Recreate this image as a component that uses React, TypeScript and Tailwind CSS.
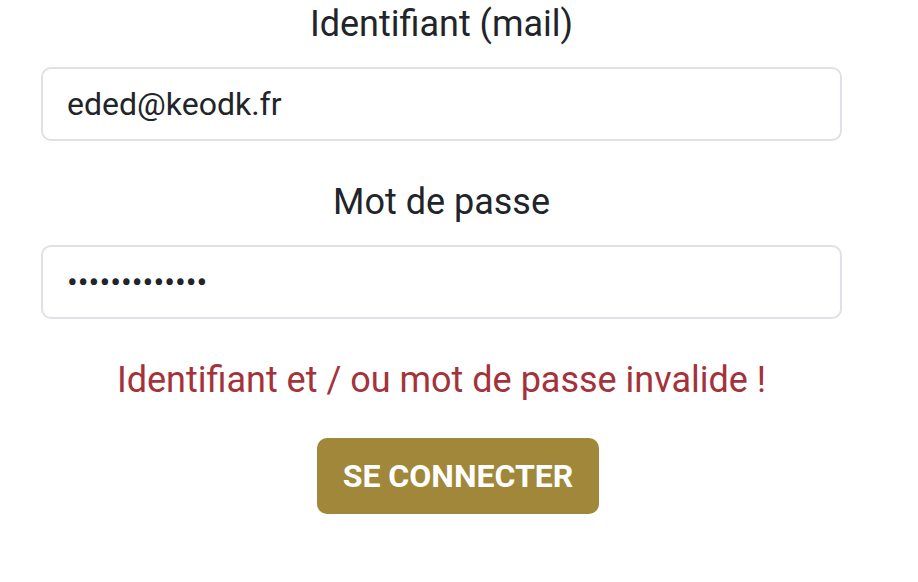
export default function App() {
  return (
    <div className="min-h-screen bg-white font-['Roboto',sans-serif] text-[#212529]">
      <form className="ml-[41px] flex w-[801px] flex-col items-center" onSubmit={(e) => e.preventDefault()}>
        <label htmlFor="mail" className="text-[36px] leading-[48px]">
          Identifiant (mail)
        </label>
        <input
          id="mail"
          type="text"
          defaultValue="eded@keodk.fr"
          className="mt-[19px] h-[74px] w-full rounded-[10px] border-2 border-[#dee2e6] px-[24px] text-[32px] outline-none"
        />

        <label htmlFor="pass" className="mt-[37px] text-[36px] leading-[48px]">
          Mot de passe
        </label>
        <input
          id="pass"
          type="password"
          defaultValue="ededkeodk1234"
          className="mt-[19px] h-[74px] w-full rounded-[10px] border-2 border-[#dee2e6] px-[24px] text-[32px] outline-none"
        />

        <p className="mt-[37px] text-[36px] leading-[48px] text-[#a4323a]">
          Identifiant et / ou mot de passe invalide !
        </p>

        <button
          type="submit"
          className="ml-[33px] mt-[34px] h-[76px] w-[282px] rounded-[10px] bg-[#a0873a] text-[32px] font-bold uppercase text-white"
        >
          Se connecter
        </button>
      </form>
    </div>
  );
}
